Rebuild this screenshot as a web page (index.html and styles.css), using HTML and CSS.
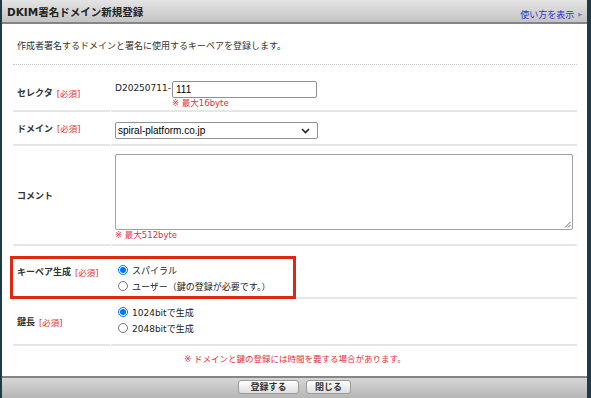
FILE: index.html
```html
<!DOCTYPE html>
<html lang="ja">
<head>
<meta charset="utf-8">
<link rel="stylesheet" href="styles.css">
</head>
<body>
<div class="panel">
  <div class="header">
    <span class="title">DKIM署名ドメイン新規登録</span>
    <a class="help">使い方を表示<span class="tri">▶</span></a>
  </div>
  <div class="content">
    <p class="intro">作成者署名するドメインと署名に使用するキーペアを登録します。</p>
    <div class="form">
      <div class="row r1">
        <div class="label lab1">セレクタ<span class="req">[必須]</span></div>
        <div class="value v1">
          <span class="prefix">D20250711-</span>
          <div class="field">
            <input class="text" type="text" value="111">
            <span class="hint">※ 最大16byte</span>
          </div>
        </div>
      </div>
      <div class="row r2">
        <div class="label">ドメイン<span class="req">[必須]</span></div>
        <div class="value v2">
          <div class="select"><span>spiral-platform.co.jp</span>
            <svg width="9" height="6" viewBox="0 0 9 6"><path d="M1 1 L4.5 4.5 L8 1" fill="none" stroke="#222" stroke-width="1.6"/></svg>
          </div>
        </div>
      </div>
      <div class="row r3">
        <div class="label">コメント</div>
        <div class="value v3">
          <div class="area"><svg class="grip" width="7" height="7" viewBox="0 0 7 7"><path d="M1 6.5 L6.5 1 M4 6.5 L6.5 4" stroke="#666" stroke-width="1"/></svg></div>
          <span class="hint">※ 最大512byte</span>
        </div>
      </div>
      <div class="row r4">
        <div class="label">キーペア生成<span class="req">[必須]</span></div>
        <div class="value radios">
          <label class="opt"><input type="radio" name="kp" checked>スパイラル</label>
          <label class="opt"><input type="radio" name="kp">ユーザー（鍵の登録が必要です。）</label>
        </div>
        <div class="mark"></div>
      </div>
      <div class="row r5">
        <div class="label">鍵長<span class="req">[必須]</span></div>
        <div class="value radios">
          <label class="opt"><input type="radio" name="kl" checked>1024bitで生成</label>
          <label class="opt"><input type="radio" name="kl">2048bitで生成</label>
        </div>
      </div>
    </div>
    <p class="note">※ ドメインと鍵の登録には時間を要する場合があります。</p>
  </div>
  <div class="footer">
    <button class="btn b1">登録する</button>
    <button class="btn b2">閉じる</button>
  </div>
</div>
</body>
</html>
```
FILE: styles.css
```css
html, body {
  margin: 0;
  padding: 0;
  height: 398px;
  overflow: hidden;
}
body {
  background: #1f3a48;
  font-family: "DejaVu Sans", "Noto Sans CJK JP", sans-serif;
  font-size: 9px;
  color: #333;
}
.panel {
  margin: 0 4px 0 2px;
  height: 398px;
  background: #fff;
  display: flex;
  flex-direction: column;
}
.header {
  height: 22px;
  border-bottom: 2px solid #858585;
  background: linear-gradient(#e4e4e4, #c4c4c4);
  display: flex;
  align-items: center;
  justify-content: space-between;
  padding: 0 5px 0 5px;
}
.title {
  font-size: 10.5px;
  font-weight: bold;
  color: #222;
  padding-top: 1px;
}
.help {
  color: #3434c8;
  font-size: 9px;
  padding-top: 6px;
  display: flex;
  align-items: center;
}
.tri {
  font-size: 5px;
  color: #6f7fbf;
  margin-left: 4px;
}
.content {
  flex: 1;
  padding: 0 10px 0 11px;
}
.intro {
  margin: 0;
  padding: 15px 0 12px 4px;
  border-bottom: 1px dotted #c8c8c8;
}
.row {
  display: grid;
  grid-template-columns: 97px 1fr;
  column-gap: 1px;
  position: relative;
}
.label, .value {
  border-bottom: 2px solid #e6e6e6;
}
.label {
  display: flex;
  align-items: center;
  padding-left: 4px;
  font-weight: bold;
  color: #333;
}
.req {
  color: #e2303c;
  font-weight: normal;
  margin-left: 4px;
  font-size: 8.5px;
}
.value {
  padding-left: 4px;
}
.r1 .label { padding-top: 10px; }
.v1 {
  display: flex;
  align-items: flex-start;
  padding-top: 16px;
  padding-bottom: 1px;
}
.prefix {
  padding-top: 2px;
  color: #222;
}
.field {
  display: flex;
  flex-direction: column;
  margin-left: 1px;
}
.text {
  box-sizing: border-box;
  width: 145px;
  height: 17px;
  margin: 0;
  border: 1px solid #8f8f8f;
  border-radius: 2px;
  padding: 0 3px;
  font-family: "Liberation Sans", sans-serif;
  font-size: 10px;
  color: #000;
}
.hint {
  color: #e2303c;
  font-size: 8.5px;
  line-height: 11px;
}
.v2 {
  padding-top: 10px;
  padding-bottom: 5px;
}
.select {
  box-sizing: border-box;
  width: 203px;
  height: 17px;
  border: 1px solid #8f8f8f;
  border-radius: 2px;
  display: flex;
  align-items: center;
  justify-content: space-between;
  padding: 0 7px 0 2px;
  font-family: "Liberation Sans", sans-serif;
  font-size: 10px;
  color: #000;
}
.v3 {
  padding-top: 8px;
  padding-bottom: 3px;
  display: flex;
  flex-direction: column;
}
.area {
  box-sizing: border-box;
  width: 458px;
  height: 76px;
  border: 1px solid #a0a0a0;
  border-radius: 2px;
  position: relative;
}
.grip {
  position: absolute;
  right: 1px;
  bottom: 1px;
}
.radios {
  display: flex;
  flex-direction: column;
  justify-content: center;
}
.r4 .radios { padding: 16px 0 3px 4px; }
.r5 .radios { padding: 5px 0 8px 4px; }
.opt {
  display: flex;
  align-items: center;
  height: 16px;
  color: #222;
}
.opt input {
  width: 10px;
  height: 10px;
  margin: 0 4px 0 3px;
}
.mark {
  position: absolute;
  left: -3px;
  top: 10px;
  width: 280px;
  height: 37px;
  border: 3px solid #dc2a12;
}
.note {
  margin: 0;
  padding: 6px 0 0;
  text-align: center;
  color: #e2303c;
  font-size: 8.5px;
}
.footer {
  height: 18px;
  border-top: 2px solid #858585;
  background: linear-gradient(#d6d6d6, #b6b6b6);
  display: flex;
  justify-content: center;
  align-items: flex-start;
  gap: 7px;
  padding: 2px 0 0 0;
}
.btn {
  height: 14px;
  padding: 0;
  border: 1px solid #9a9a9a;
  border-radius: 3px;
  background: linear-gradient(#ffffff, #dedede);
  font-family: "Noto Sans CJK JP", sans-serif;
  font-size: 9px;
  font-weight: bold;
  color: #333;
  line-height: 12px;
}
.b1 { width: 61px; }
.b2 { width: 45px; }
```
